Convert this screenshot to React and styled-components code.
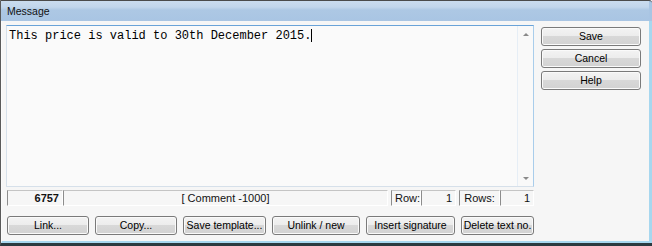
import React from 'react'
import styled, { createGlobalStyle } from 'styled-components'

const GlobalStyle = createGlobalStyle`
  html, body {
    margin: 0;
    padding: 0;
    background: #ffffff;
  }
  body {
    font-family: 'Liberation Sans', Tahoma, Arial, sans-serif;
  }
`

export default function App() {
  return (
    <>
      <GlobalStyle />
      <Window>
        <TitleBar>Message</TitleBar>
        <Body>
          <LeftCol>
            <Editor>
              <EditorText>
                This price is valid to 30th December 2015.<Caret />
              </EditorText>
              <ScrollBar>
                <Arrow $dir="up" />
                <Arrow $dir="down" />
              </ScrollBar>
            </Editor>
            <StatusRow>
              <StatusGroup>
                <StatusCell $w={56} $align="right" $bold>
                  6757
                </StatusCell>
                <StatusCell $w={325} $align="center">
                  [ Comment -1000]
                </StatusCell>
              </StatusGroup>
              <StatusGroup>
                <StatusCell $w={30}>Row:</StatusCell>
                <StatusCell $w={35} $align="right">
                  1
                </StatusCell>
              </StatusGroup>
              <StatusGroup>
                <StatusCell $w={41} $align="center">
                  Rows:
                </StatusCell>
                <StatusCell $w={34} $align="right">
                  1
                </StatusCell>
              </StatusGroup>
            </StatusRow>
            <ButtonRow>
              <Button $w={82}>Link...</Button>
              <Button $w={82}>Copy...</Button>
              <Button $w={83}>Save template...</Button>
              <Button $w={88}>Unlink / new</Button>
              <Button $w={89}>Insert signature</Button>
              <Button $w={73}>Delete text no.</Button>
            </ButtonRow>
          </LeftCol>
          <RightCol>
            <Button $w={100}>Save</Button>
            <Button $w={100}>Cancel</Button>
            <Button $w={100}>Help</Button>
          </RightCol>
        </Body>
      </Window>
    </>
  )
}

const Window = styled.div`
  width: 652px;
  height: 246px;
  box-sizing: border-box;
  display: flex;
  flex-direction: column;
  border-top: 1px solid #4b4b4b;
  border-left: 1px solid #5a5a5a;
  border-bottom: 3px solid #2b3a40;
  border-top-right-radius: 3px;
  background: #3d4b52;
  overflow: hidden;
`

const TitleBar = styled.div`
  height: 20px;
  flex: none;
  box-sizing: border-box;
  padding: 3px 0 0 6px;
  font-size: 10.5px;
  line-height: 14px;
  color: #111;
  background: linear-gradient(#cadcee 0%, #c2d6eb 30%, #adc8e4 45%, #a9c5e3 100%);
  border-right: 3px solid #a9c5e3;
`

const Body = styled.div`
  flex: 1;
  display: flex;
  gap: 7px;
  box-sizing: border-box;
  padding: 4px 0 0 4px;
  background: #f6f6f6;
  border-left: 1px solid #fbfbfb;
  border-right: 3px solid #a7d7ef;
  border-bottom: 2px solid #a7d7ef;
`

const LeftCol = styled.div`
  width: 528px;
  display: flex;
  flex-direction: column;
`

const RightCol = styled.div`
  display: flex;
  flex-direction: column;
  gap: 3px;
  padding-top: 2px;
`

const Editor = styled.div`
  height: 162px;
  box-sizing: border-box;
  display: flex;
  background: #fafafa;
  border: 1px solid #d6e0ea;
  border-top-color: #6aa3d8;
  border-right-color: #a9cdeb;
`

const EditorText = styled.div`
  flex: 1;
  padding: 3px 2px;
  font-family: 'Liberation Mono', 'Courier New', monospace;
  font-size: 12px;
  line-height: 14px;
  color: #000;
  white-space: pre;
`

const Caret = styled.span`
  display: inline-block;
  width: 0;
  height: 13px;
  border-left: 1px solid #000;
  vertical-align: -3px;
`

const ScrollBar = styled.div`
  width: 15px;
  display: flex;
  flex-direction: column;
  justify-content: space-between;
  align-items: center;
  padding: 7px 0 6px;
  border-left: 1px solid #e6eef6;
  background: #f9f9f9;
`

const Arrow = styled.span`
  width: 0;
  height: 0;
  border-left: 3px solid transparent;
  border-right: 3px solid transparent;
  ${(p) =>
    p.$dir === 'up'
      ? 'border-bottom: 3px solid #8a8a8a;'
      : 'border-top: 3px solid #8a8a8a;'}
`

const StatusRow = styled.div`
  display: flex;
  gap: 3px;
  margin-top: 3px;
  padding-left: 1px;
  height: 16px;
`

const StatusGroup = styled.div`
  display: flex;
`

const StatusCell = styled.div`
  width: ${(p) => p.$w}px;
  box-sizing: border-box;
  height: 16px;
  padding: 0 3px;
  font-size: 11px;
  line-height: 14px;
  font-weight: ${(p) => (p.$bold ? 700 : 400)};
  text-align: ${(p) => p.$align || 'left'};
  color: #111;
  border-top: 1px solid #c4c4c4;
  border-left: 1px solid #8c8c8c;
  border-right: 1px solid #ffffff;
  border-bottom: 1px solid #ffffff;
  white-space: nowrap;
  overflow: hidden;
`

const ButtonRow = styled.div`
  display: flex;
  justify-content: space-between;
  margin-top: 10px;
  padding-left: 1px;
`

const Button = styled.button`
  width: ${(p) => p.$w}px;
  height: 19px;
  box-sizing: border-box;
  padding: 0;
  font-family: 'Liberation Sans', Tahoma, Arial, sans-serif;
  font-size: 10.5px;
  line-height: 15px;
  color: #000;
  border: 1px solid #7a7a7a;
  border-radius: 3px;
  background: linear-gradient(#f3f3f3 0%, #ececec 48%, #d8d8d8 50%, #d2d2d2 100%);
  box-shadow: inset 0 0 0 1px #fafafa;
  white-space: nowrap;
  overflow: hidden;
`
